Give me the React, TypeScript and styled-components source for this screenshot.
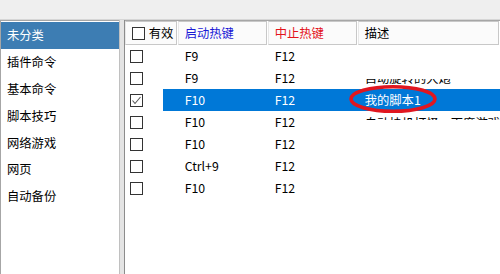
import React from "react";
import styled, { createGlobalStyle } from "styled-components";

const Global = createGlobalStyle`
  html, body { margin: 0; padding: 0; background: #f0f0f0; }
  body { font-family: "Noto Sans CJK SC", "Liberation Sans", sans-serif; font-size: 12px; color: #000; }
  #root { width: 500px; height: 274px; overflow: hidden; }
`;

const Page = styled.div`
  width: 500px;
  height: 274px;
  display: flex;
  flex-direction: column;
  background: #f0f0f0;
`;

const TopBar = styled.div`
  height: 19px;
  background: #efefef;
  border-bottom: 1px solid #d6d6d6;
  flex: none;
`;

const Main = styled.div`
  flex: 1;
  display: flex;
  min-height: 0;
`;

const Sidebar = styled.div`
  width: 121px;
  background: #fff;
  border-top: 1px solid #a6a6a6;
  border-left: 1px solid #a6a6a6;
  display: flex;
  flex-direction: column;
  padding-top: 1px;
`;

const SideItem = styled.div<{ $active?: boolean }>`
  height: 26.8px;
  display: flex;
  align-items: center;
  padding-left: 6px;
  font-size: 12.3px;
  background: ${(p) => (p.$active ? "#3d7db3" : "transparent")};
  color: ${(p) => (p.$active ? "#fff" : "#000")};
`;

const Splitter = styled.div`
  width: 4px;
  background: #e4e4e4;
  border-left: 1px solid #c0c0c0;
  border-right: 1px solid #8c8c8c;
`;

const Table = styled.div`
  flex: 1;
  background: #fff;
  border-top: 1px solid #a6a6a6;
  display: flex;
  flex-direction: column;
`;

const HeaderRow = styled.div`
  display: grid;
  grid-template-columns: 53px 90px 90px 1fr;
  height: 24px;
  background: #fff;
`;

const HeadCell = styled.div<{ $color?: string }>`
  display: flex;
  align-items: center;
  gap: 4px;
  padding-left: 6px;
  color: ${(p) => p.$color || "#000"};
  font-size: 12.3px;
  background: #fbfbfb;
  border: 1px solid #c8c8c8;
  border-left-color: #e8e8e8;
  box-sizing: border-box;
  margin-right: 1px;
`;

const Row = styled.div`
  display: grid;
  grid-template-columns: 38px 15px 90px 90px 1fr;
  height: 22px;
`;

const CheckCell = styled.div`
  display: flex;
  align-items: center;
  padding-left: 5px;
`;

const Cell = styled.div<{ $sel?: boolean; $pad?: number }>`
  position: relative;
  display: flex;
  align-items: center;
  padding-left: ${(p) => p.$pad ?? 7}px;
  background: ${(p) => (p.$sel ? "#0078d7" : "transparent")};
  color: ${(p) => (p.$sel ? "#fff" : "#000")};
  white-space: nowrap;
  font-size: 12.3px;
`;

const Box = styled.div`
  width: 13px;
  height: 13px;
  box-sizing: border-box;
  border: 1px solid #333;
  background: #fff;
  display: flex;
  align-items: center;
  justify-content: center;
`;

const Clip = styled.div<{ $h: number; $from: "top" | "bottom" }>`
  height: ${(p) => p.$h}px;
  overflow: hidden;
  display: flex;
  flex-direction: column;
  justify-content: ${(p) => (p.$from === "bottom" ? "flex-end" : "flex-start")};
  align-self: ${(p) => (p.$from === "bottom" ? "flex-end" : "flex-start")};
  margin-bottom: ${(p) => (p.$from === "bottom" ? 4 : 0)}px;
  margin-top: ${(p) => (p.$from === "top" ? 5 : 0)}px;
  line-height: 14px;
`;

const Ring = styled.svg`
  position: absolute;
  left: -9px;
  top: -4px;
  width: 87px;
  height: 28px;
  pointer-events: none;
  overflow: visible;
`;

const CheckBox = ({ checked }: { checked?: boolean }) => (
  <Box>
    {checked && (
      <svg width="11" height="11" viewBox="0 0 11 11">
        <polyline points="1.5,5.5 4,8.5 9.5,2" fill="none" stroke="#555" strokeWidth="1.1" />
      </svg>
    )}
  </Box>
);

const categories = ["未分类", "插件命令", "基本命令", "脚本技巧", "网络游戏", "网页", "自动备份"];

type R = { start: string; stop: string; desc?: React.ReactNode; checked?: boolean; sel?: boolean };

const rows: R[] = [
  { start: "F9", stop: "F12" },
  {
    start: "F9",
    stop: "F12",
    desc: (
      <Clip $h={6} $from="bottom">
        <span>自动旋转的大炮</span>
      </Clip>
    ),
  },
  { start: "F10", stop: "F12", checked: true, sel: true, desc: "我的脚本1" },
  {
    start: "F10",
    stop: "F12",
    desc: (
      <Clip $h={4} $from="top">
        <span>自动挂机打怪一百度游戏</span>
      </Clip>
    ),
  },
  { start: "F10", stop: "F12" },
  { start: "Ctrl+9", stop: "F12" },
  { start: "F10", stop: "F12" },
];

export default function App() {
  return (
    <Page>
      <Global />
      <TopBar />
      <Main>
        <Sidebar>
          {categories.map((c, i) => (
            <SideItem key={c} $active={i === 0}>
              {c}
            </SideItem>
          ))}
        </Sidebar>
        <Splitter />
        <Table>
          <HeaderRow>
            <HeadCell>
              <CheckBox />
              有效
            </HeadCell>
            <HeadCell $color="#1a1ad6">启动热键</HeadCell>
            <HeadCell $color="#e3141b">中止热键</HeadCell>
            <HeadCell>描述</HeadCell>
          </HeaderRow>
          {rows.map((r, i) => (
            <Row key={i}>
              <CheckCell>
                <CheckBox checked={r.checked} />
              </CheckCell>
              <Cell $sel={r.sel} $pad={0} />
              <Cell $sel={r.sel}>{r.start}</Cell>
              <Cell $sel={r.sel}>{r.stop}</Cell>
              <Cell $sel={r.sel}>
                {r.desc}
                {r.sel && (
                  <Ring viewBox="0 0 87 28">
                    <ellipse cx="44" cy="14" rx="42" ry="12.3" fill="none" stroke="#e0161f" strokeWidth="3.6" />
                  </Ring>
                )}
              </Cell>
            </Row>
          ))}
        </Table>
      </Main>
    </Page>
  );
}
